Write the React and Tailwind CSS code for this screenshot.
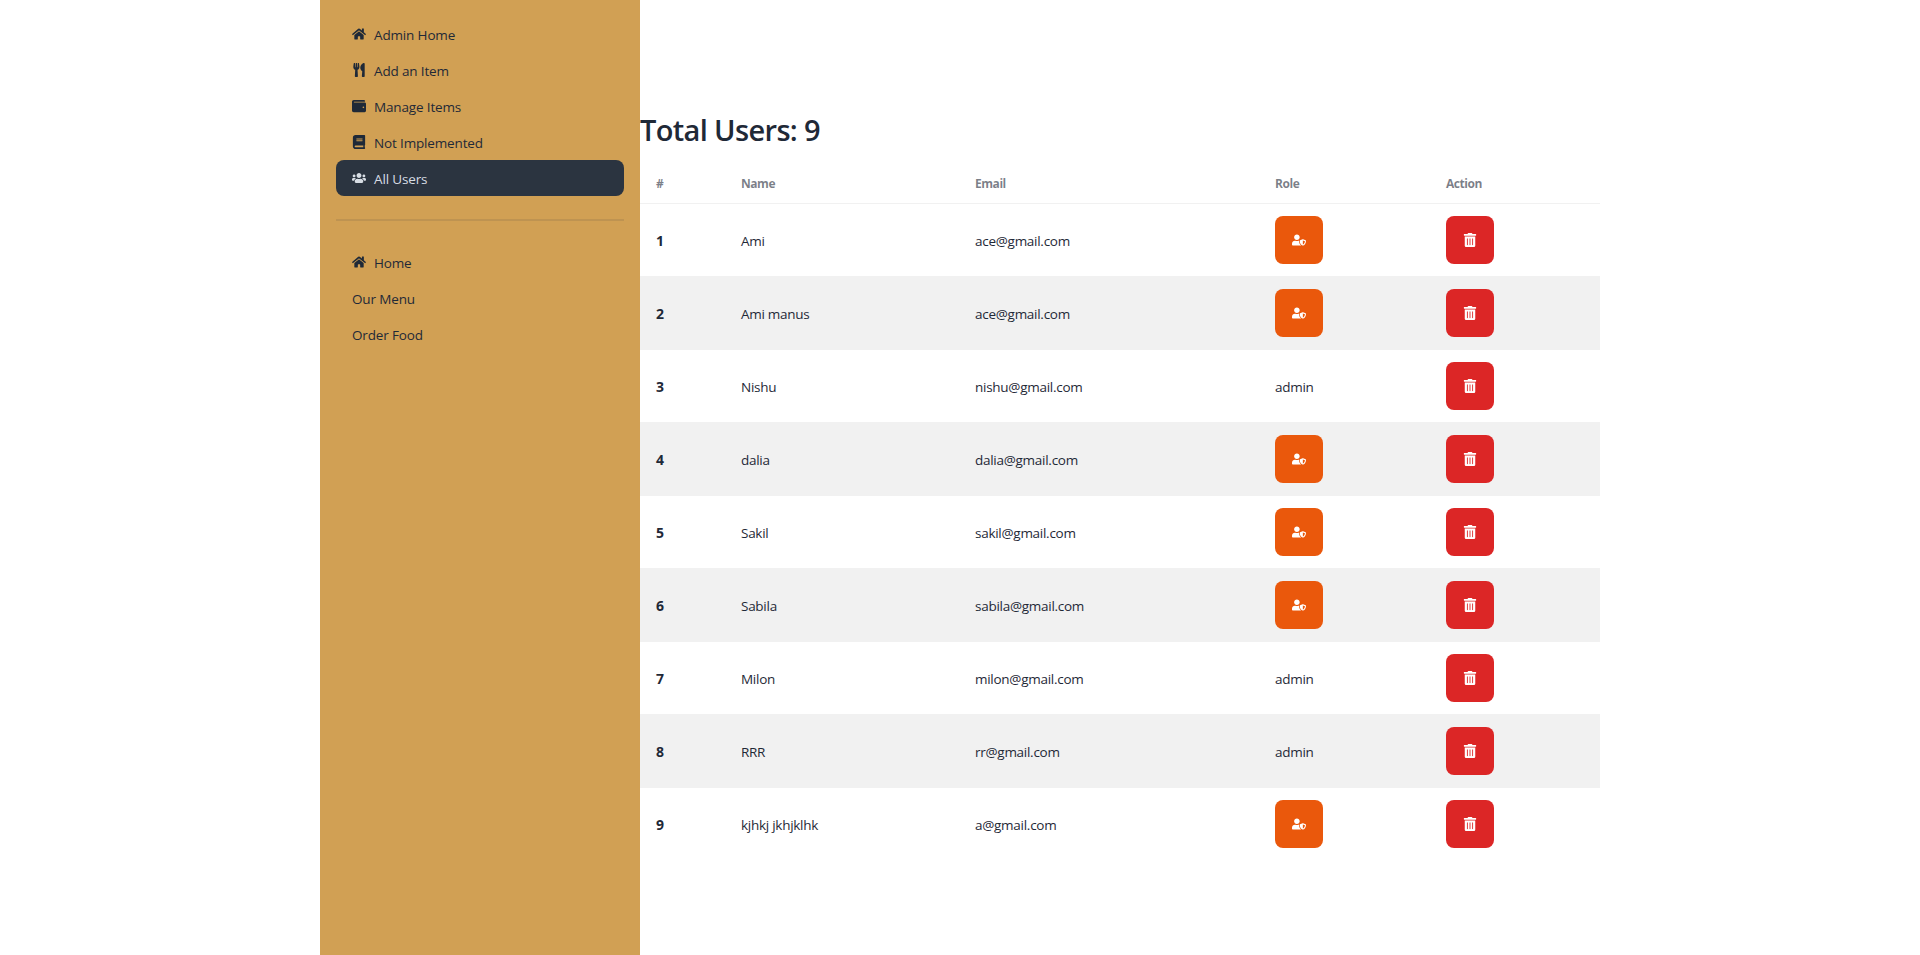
import { FaHome, FaUtensils, FaWallet, FaBook, FaUsers, FaUserShield, FaTrashAlt } from 'react-icons/fa';

const adminLinks = [
  { label: 'Admin Home', Icon: FaHome },
  { label: 'Add an Item', Icon: FaUtensils },
  { label: 'Manage Items', Icon: FaWallet },
  { label: 'Not Implemented', Icon: FaBook },
  { label: 'All Users', Icon: FaUsers, active: true },
];

const siteLinks = [
  { label: 'Home', Icon: FaHome },
  { label: 'Our Menu' },
  { label: 'Order Food' },
];

const users = [
  { name: 'Ami', email: 'ace@gmail.com' },
  { name: 'Ami manus', email: 'ace@gmail.com' },
  { name: 'Nishu', email: 'nishu@gmail.com', admin: true },
  { name: 'dalia', email: 'dalia@gmail.com' },
  { name: 'Sakil', email: 'sakil@gmail.com' },
  { name: 'Sabila', email: 'sabila@gmail.com' },
  { name: 'Milon', email: 'milon@gmail.com', admin: true },
  { name: 'RRR', email: 'rr@gmail.com', admin: true },
  { name: 'kjhkj jkhjklhk', email: 'a@gmail.com' },
];

function NavItem({ label, Icon, active }) {
  return (
    <li>
      <a
        className={
          active
            ? 'flex h-9 items-center gap-2 rounded-lg bg-[#2b3440] px-4 text-[#d7dde4]'
            : 'flex h-9 items-center gap-2 px-4'
        }
      >
        {Icon && <Icon className="mb-px size-3.5 shrink-0" />}
        <span className="pt-0.5 tracking-[-0.15px]">{label}</span>
      </a>
    </li>
  );
}

export default function App() {
  return (
    <div className="min-h-screen bg-white font-['Open_Sans','Noto_Sans',sans-serif] text-[13.5px] leading-5 text-[#1f2937]">
      <div className="mx-auto flex w-[1280px]">
        <aside className="min-h-screen w-80 shrink-0 bg-[#d1a054] p-4">
          <ul>
            {adminLinks.map((l) => <NavItem key={l.label} {...l} />)}
          </ul>
          <div className="my-4 flex h-4 items-center">
            <div className="h-0.5 w-full bg-[#1f2937]/10" />
          </div>
          <ul>
            {siteLinks.map((l) => <NavItem key={l.label} {...l} />)}
          </ul>
        </aside>
        <main className="flex-1 pt-[112px]">
          <h2 className="h-[51px] text-[29px] leading-9 font-semibold tracking-[-0.65px] whitespace-nowrap">Total Users: 9</h2>
          <table className="w-full table-fixed border-separate border-spacing-0 text-left">
            <colgroup>
              <col className="w-[85px]" />
              <col className="w-[234px]" />
              <col className="w-[300px]" />
              <col className="w-[171px]" />
              <col className="w-[170px]" />
            </colgroup>
            <thead>
              <tr className="h-[41px] text-xs tracking-[-0.45px] text-[#1f2937]/60">
                {['#', 'Name', 'Email', 'Role', 'Action'].map((h) => (
                  <th key={h} className="border-b border-[#f1f1f1] px-4 pt-0.5 font-bold">{h}</th>
                ))}
              </tr>
            </thead>
            <tbody className="tracking-[-0.27px] [&>tr:not(:last-child)>*]:border-b [&>tr>*]:border-[#f1f1f1]">
              {users.map((u, i) => (
                <tr key={i} className="h-[73px] last:h-[72px] even:bg-[#f1f1f1]">
                  <th className="px-4 pt-px text-sm font-bold">{i + 1}</th>
                  <td className="px-4 pt-px">{u.name}</td>
                  <td className="px-4 pt-px">{u.email}</td>
                  {u.admin ? (
                    <td className="px-4 pt-px">admin</td>
                  ) : (
                    <td className="px-4">
                      <button className="flex size-12 items-center justify-center rounded-lg bg-[#ea580c] text-white">
                        <FaUserShield className="size-3.5" />
                      </button>
                    </td>
                  )}
                  <td className="px-4">
                    <button className="flex size-12 items-center justify-center rounded-lg bg-[#dc2626] text-white">
                      <FaTrashAlt className="size-3.5" />
                    </button>
                  </td>
                </tr>
              ))}
            </tbody>
          </table>
        </main>
      </div>
    </div>
  );
}
